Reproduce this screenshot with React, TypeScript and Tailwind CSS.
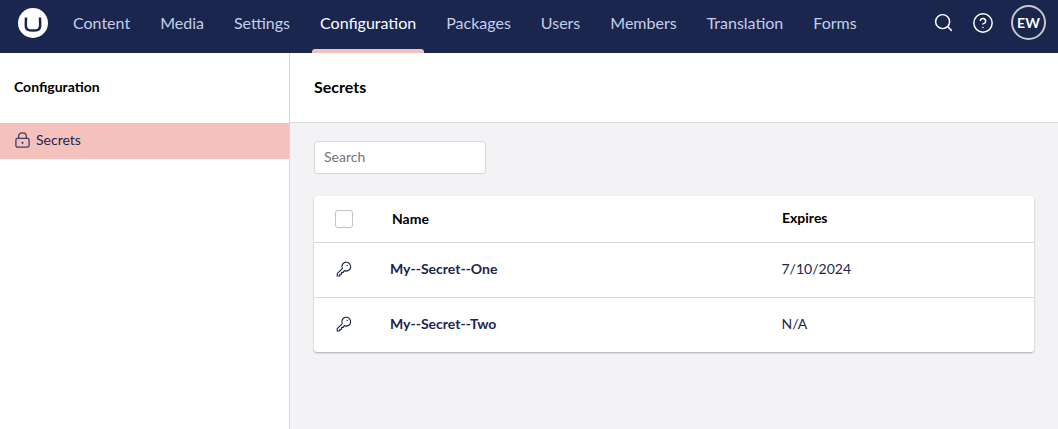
import { Search, CircleHelp } from "lucide-react"

const sections = ["Content", "Media", "Settings", "Configuration", "Packages", "Users", "Members", "Translation", "Forms"]

const secrets = [
  { id: "1", name: "My--Secret--One", expires: "7/10/2024", rowClass: "h-[55px] border-b border-[#d8d7d9]" },
  { id: "2", name: "My--Secret--Two", expires: "N/A", rowClass: "h-[54px]" },
]

function Logo() {
  return (
    <svg width="30" height="30" viewBox="0 0 30 30" className="shrink-0">
      <circle cx="15" cy="15" r="15" fill="white" />
      <path d="M8 9.5 L7.8 16.5 C7.7 21.6 9.6 22.6 15 22.6 C20.4 22.6 22.3 21.6 22.2 16.5 L22 9.5" fill="none" stroke="#1b264f" strokeWidth="2.5" />
    </svg>
  )
}

function KeyIcon() {
  return (
    <svg width="16" height="16" viewBox="0 0 16 16" fill="none" stroke="#1b264f" strokeWidth="1.15" strokeLinejoin="round" className="shrink-0">
      <path d="M6.3 7.6 L1.2 12.7 V15 H3.8 V13.2 H5.6 V11.4 H7.2 L8.3 9.6 A4.4 4.4 0 1 0 6.3 7.6 Z" />
      <circle cx="11.2" cy="4.4" r="0.7" fill="#1b264f" stroke="none" />
    </svg>
  )
}

function LockIcon() {
  return (
    <svg width="15" height="16" viewBox="0 0 15 16" fill="none" stroke="#3f3f66" strokeWidth="1.3" className="shrink-0">
      <rect x="0.9" y="6.4" width="13.2" height="8.8" rx="1.6" />
      <path d="M3.6 6.4 V4.4 C3.6 2 5.2 0.9 7.5 0.9 C9.8 0.9 11.4 2 11.4 4.4 V6.4" />
      <circle cx="7.5" cy="10.8" r="1.1" fill="#3f3f66" stroke="none" />
    </svg>
  )
}

export default function App() {
  return (
    <div className="flex h-[429px] w-[1058px] flex-col overflow-hidden bg-white font-['Lato',sans-serif] text-[#1b264f]">
      {/* Top bar */}
      <header className="flex h-[53px] shrink-0 bg-[#1b264f] pl-[18px] pr-[12px]">
        <div className="flex items-center pb-2"><Logo /></div>
        <nav className="ml-[17px] flex h-full gap-[14px]">
          {sections.map((label) => (
            <div key={label} className={"relative flex h-full items-center px-2 pb-2 text-base " + (label === "Configuration" ? "text-white" : "text-[#c4cee8]")}>
              {label}
              {label === "Configuration" && <div className="absolute inset-x-0 bottom-0 h-1 rounded-t-[3px] bg-[#f5c1bc]" />}
            </div>
          ))}
        </nav>
        <div className="ml-auto flex items-center pb-2">
          <Search className="size-[21px] text-white" strokeWidth={1.7} />
          <CircleHelp className="ml-[18px] size-[22px] text-white" strokeWidth={1.6} />
          <div className="ml-[17px] flex size-[35px] items-center justify-center rounded-full border-2 border-[#c8c8cc] text-sm font-bold text-white">EW</div>
        </div>
      </header>

      <div className="flex min-h-0 flex-1">
        {/* Sidebar */}
        <aside className="w-[290px] shrink-0 border-r border-[#d8d7d9] bg-white">
          <div className="flex h-[70px] items-center pb-[2px] pl-[14px] text-sm font-bold text-black">Configuration</div>
          <div className="flex h-9 items-center gap-[6px] bg-[#f5c1bc] pb-[2px] pl-[15px] text-sm">
            <LockIcon />
            Secrets
          </div>
        </aside>

        {/* Main */}
        <main className="flex min-w-0 flex-1 flex-col bg-[#f3f3f5]">
          <div className="flex h-[70px] shrink-0 items-center border-b border-[#d8d7d9] bg-white pb-[2px] pl-6 text-base font-bold text-black">Secrets</div>
          <div className="px-6 pt-[18px]">
            <div className="flex h-[33px] w-[172px] items-center rounded-[3px] border border-[#d8d7d9] bg-white px-[9px] pb-[2px] text-sm text-[#74747c]">Search</div>
            <div className="mt-[22px] rounded-[3px] bg-white shadow-[0_1px_2px_rgba(0,0,0,0.3)]">
              <div className="flex h-[47px] items-center border-b border-[#d8d7d9] text-sm font-bold text-black">
                <div className="ml-[21px] size-[18px] rounded-[3px] border border-[#c4c4c8] bg-white" />
                <div className="ml-[39px] w-[390px]">Name</div>
                <div className="pb-[2px]">Expires</div>
              </div>
              {secrets.map((secret) => (
                <div key={secret.id} className={"flex items-center pb-[2px] text-sm " + secret.rowClass}>
                  <div className="ml-[22px] flex w-[54px] shrink-0"><KeyIcon /></div>
                  <div className="w-[391.5px] font-bold">{secret.name}</div>
                  <div>{secret.expires}</div>
                </div>
              ))}
            </div>
          </div>
        </main>
      </div>
    </div>
  )
}
